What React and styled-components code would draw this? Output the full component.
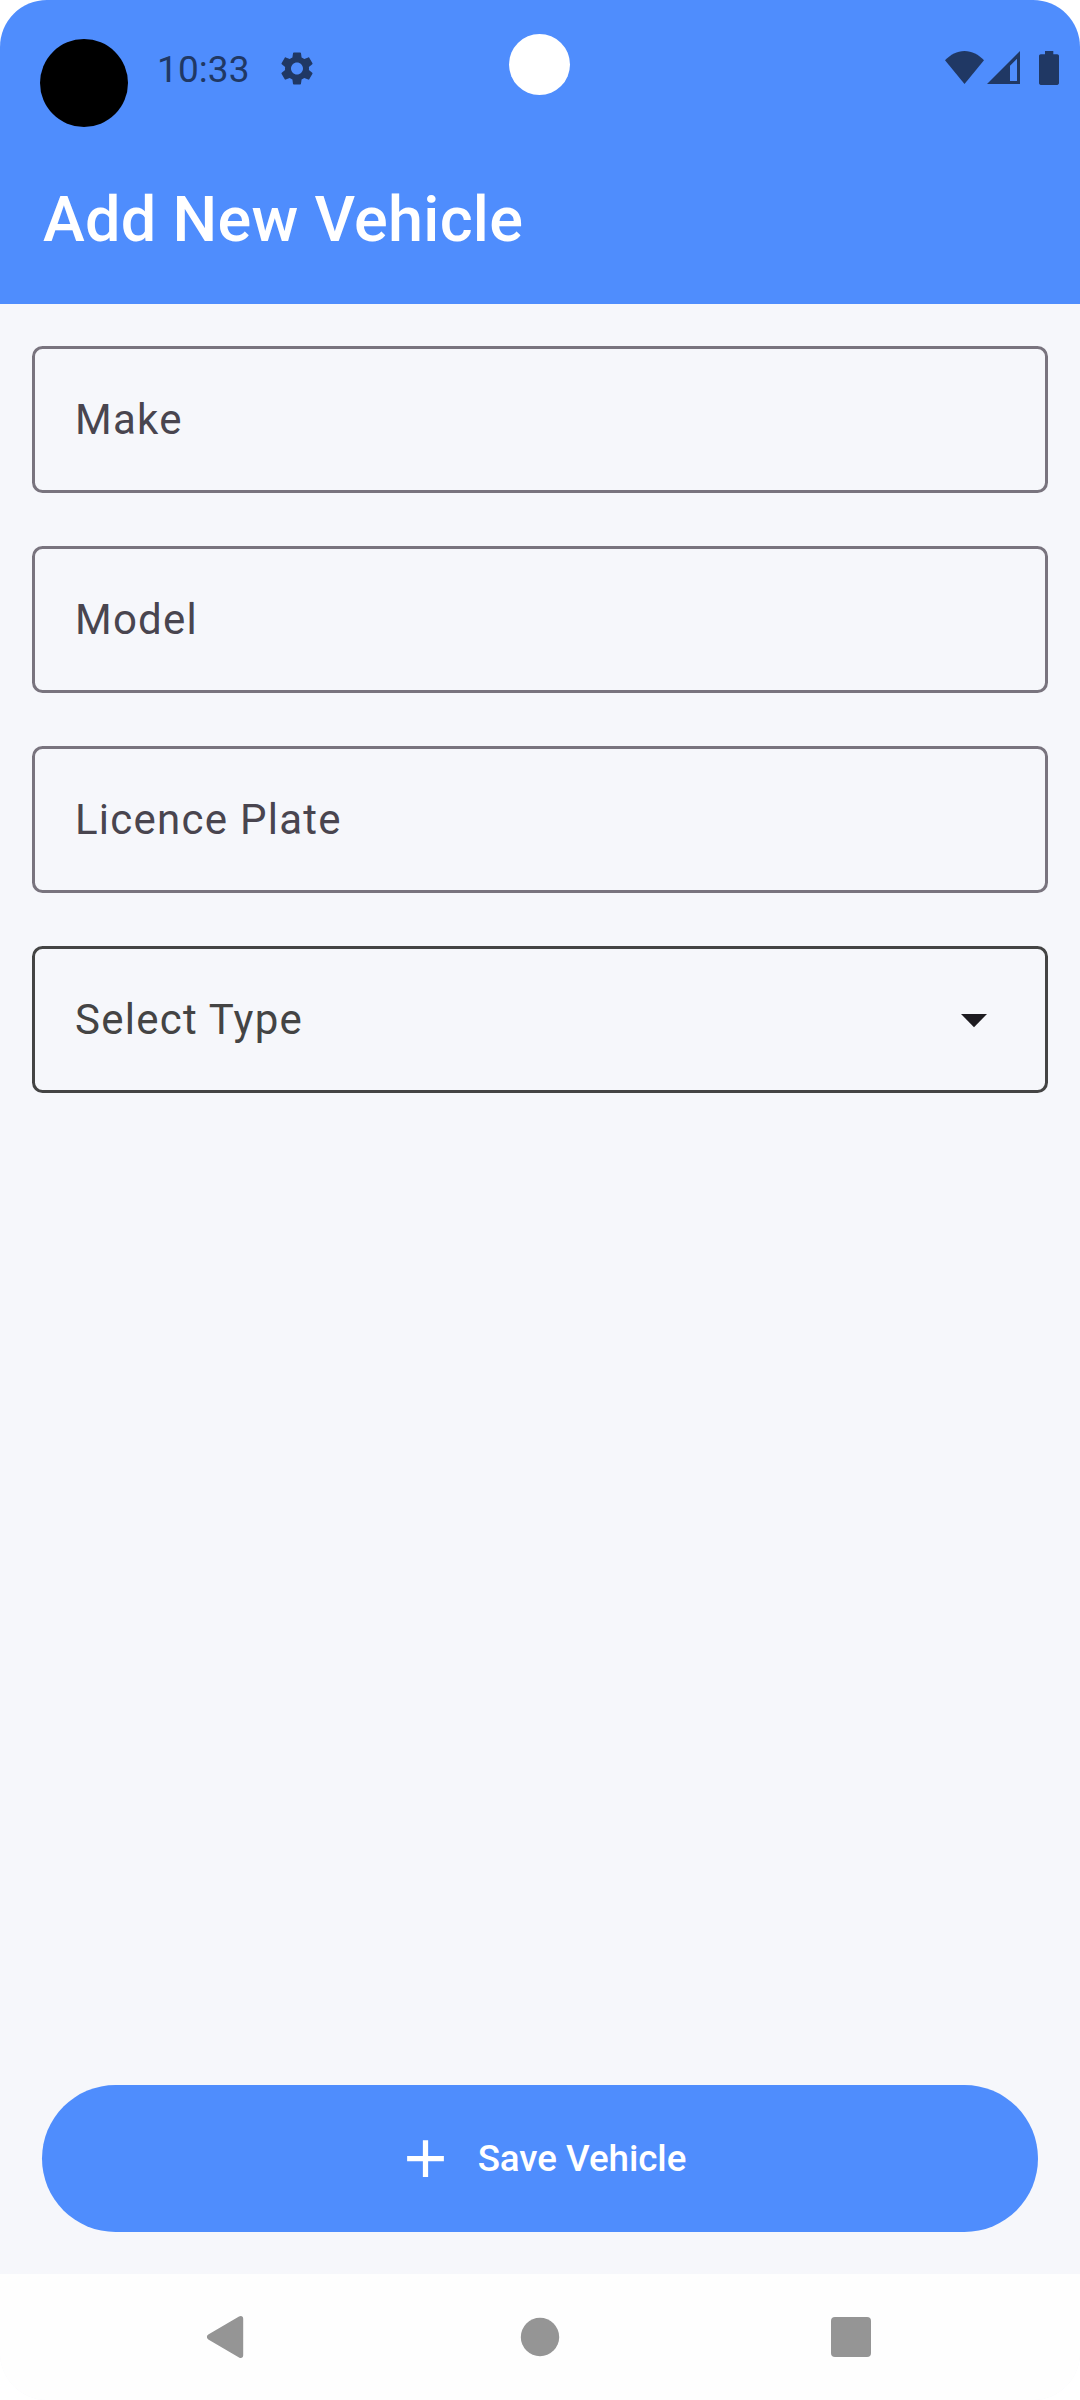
import React from 'react';
import styled, { createGlobalStyle } from 'styled-components';

const GlobalStyle = createGlobalStyle`
  *, *::before, *::after { box-sizing: border-box; }
  body { margin: 0; background: #fff; font-family: Roboto, "Noto Sans", sans-serif; }
`;

const Screen = styled.div`
  position: relative;
  display: flex;
  flex-direction: column;
  width: 1080px;
  height: 2400px;
  border-radius: 47px;
  overflow: hidden;
  background: #f6f7fb;
`;

const Header = styled.header`
  height: 304px;
  background: #4f8dfd;
`;

const StatusBar = styled.div`
  display: flex;
  justify-content: space-between;
  height: 136px;
  padding: 0 21px 0 40px;
  color: #203864;
`;

const StatusGroup = styled.div`
  display: flex;
  align-items: center;
  height: 136px;
`;

const AppBadge = styled.div`
  width: 88px;
  height: 88px;
  margin-top: 30px;
  border-radius: 50%;
  background: #000;
`;

const Clock = styled.span`
  margin: 4px 0 0 29px;
  font-size: 37px;
  line-height: 44px;
  letter-spacing: 0.1px;
`;

const StatusIcon = styled.svg`
  display: block;
  flex: none;
  width: ${(p) => p.$w}px;
  height: ${(p) => p.$h}px;
  margin-left: ${(p) => p.$gap}px;
  fill: currentColor;
`;

const Cutout = styled.div`
  position: absolute;
  top: 34px;
  left: 509px;
  width: 61px;
  height: 61px;
  border-radius: 50%;
  background: #fff;
`;

const Title = styled.h1`
  margin: 0;
  padding: 47px 43px 0;
  font-size: 63px;
  font-weight: 500;
  line-height: 74px;
  letter-spacing: 0.27px;
  color: #fff;
`;

const Form = styled.main`
  display: flex;
  flex: 1;
  flex-direction: column;
  gap: 53px;
  padding: 42px 32px 0;
`;

const Field = styled.div`
  display: flex;
  align-items: center;
  justify-content: space-between;
  height: 147px;
  padding: 0 53px 0 40px;
  border: 3px solid ${(p) => (p.$select ? '#444444' : '#79747e')};
  border-radius: 10.5px;
  color: ${(p) => (p.$select ? '#444444' : '#49454f')};
  font-size: 42px;
  line-height: 50px;
  letter-spacing: 1.25px;
`;

const Caret = styled.svg`
  width: 36px;
  height: 24px;
  fill: #1d1b20;
`;

const Footer = styled.footer`
  padding: 0 42px 42px;
`;

const SaveButton = styled.button`
  display: flex;
  align-items: center;
  justify-content: center;
  gap: 21px;
  width: 100%;
  height: 147px;
  padding: 0;
  border: 0;
  border-radius: 73.5px;
  background: #4f8dfd;
  color: #fff;
  font-family: inherit;
  font-size: 36.75px;
  font-weight: 500;
  line-height: 44px;
  letter-spacing: -0.05px;
`;

const PlusIcon = styled.svg`
  width: 63px;
  height: 63px;
  fill: currentColor;
`;

const NavBar = styled.nav`
  display: flex;
  align-items: center;
  justify-content: center;
  gap: 247px;
  height: 126px;
  background: #fefefe;
`;

const NavIcon = styled.svg`
  width: 64px;
  height: 64px;
  fill: #959595;
`;

const fields = ['Make', 'Model', 'Licence Plate'];

export default function App() {
  return (
    <>
      <GlobalStyle />
      <Screen>
        <Header>
          <StatusBar>
            <StatusGroup>
              <AppBadge />
              <Clock>10:33</Clock>
              <StatusIcon $w={40} $h={41} $gap={27} viewBox="0 0 24 24">
                <path d="M19.14 12.94c.04-.3.06-.61.06-.94 0-.32-.02-.64-.07-.94l2.03-1.58c.18-.14.23-.41.12-.61l-1.92-3.32c-.12-.22-.37-.29-.59-.22l-2.39.96c-.5-.38-1.03-.7-1.62-.94l-.36-2.54c-.04-.24-.24-.41-.48-.41h-3.84c-.24 0-.43.17-.47.41l-.36 2.54c-.59.24-1.13.57-1.62.94l-2.39-.96c-.22-.08-.47 0-.59.22L2.74 8.87c-.12.21-.08.47.12.61l2.03 1.58c-.05.3-.09.63-.09.94s.02.64.07.94l-2.03 1.58c-.18.14-.23.41-.12.61l1.92 3.32c.12.22.37.29.59.22l2.39-.96c.5.38 1.03.7 1.62.94l.36 2.54c.05.24.24.41.48.41h3.84c.24 0 .44-.17.47-.41l.36-2.54c.59-.24 1.13-.56 1.62-.94l2.39.96c.22.08.47 0 .59-.22l1.92-3.32c.12-.22.07-.47-.12-.61l-2.01-1.58zM12 15.6c-1.98 0-3.6-1.62-3.6-3.6s1.62-3.6 3.6-3.6 3.6 1.62 3.6 3.6-1.62 3.6-3.6 3.6z" />
              </StatusIcon>
            </StatusGroup>
            <StatusGroup>
              <StatusIcon $w={39} $h={34} $gap={0} viewBox="0 0 39 34">
                <path d="M0 9.3C5.500 3.500 12 0 19.500 0S33.500 3.500 39 9.300L19.500 33z" />
              </StatusIcon>
              <StatusIcon $w={33} $h={34} $gap={3} viewBox="0 0 33 34">
                <path fillRule="evenodd" d="M33 0V33H0zM30 7.700L23 14.800V30H30z" />
              </StatusIcon>
              <StatusIcon $w={20} $h={34} $gap={19} viewBox="0 0 20 34">
                <path d="M6 0h8.300v3.300h3.900c1 0 1.800.8 1.800 1.800v27c0 1-.8 1.800-1.800 1.800H1.800C.8 33.900 0 33.100 0 32.100v-27c0-1 .8-1.800 1.800-1.800H6z" />
              </StatusIcon>
            </StatusGroup>
          </StatusBar>
          <Title>Add New Vehicle</Title>
        </Header>
        <Form>
          {fields.map((label) => (
            <Field key={label}>{label}</Field>
          ))}
          <Field $select>
            Select Type
            <Caret viewBox="0 0 36 24">
              <path d="M5 6h26L18 19.200z" />
            </Caret>
          </Field>
        </Form>
        <Footer>
          <SaveButton>
            <PlusIcon viewBox="0 0 24 24">
              <path d="M19 13h-6v6h-2v-6H5v-2h6V5h2v6h6z" />
            </PlusIcon>
            Save Vehicle
          </SaveButton>
        </Footer>
        <NavBar>
          <NavIcon viewBox="0 0 64 64">
            <path d="M11.300 29.600L42 11.500c2.200-1.200 4.200-.2 4.200 2.200v36.600c0 2.400-2 3.400-4.200 2.200L11.300 34.400c-1.900-1.200-1.900-3.600 0-4.800z" />
          </NavIcon>
          <NavIcon viewBox="0 0 64 64">
            <circle cx="32" cy="32" r="19.200" />
          </NavIcon>
          <NavIcon viewBox="0 0 64 64">
            <rect x="12" y="12" width="40" height="40" rx="4" />
          </NavIcon>
        </NavBar>
        <Cutout />
      </Screen>
    </>
  );
}
